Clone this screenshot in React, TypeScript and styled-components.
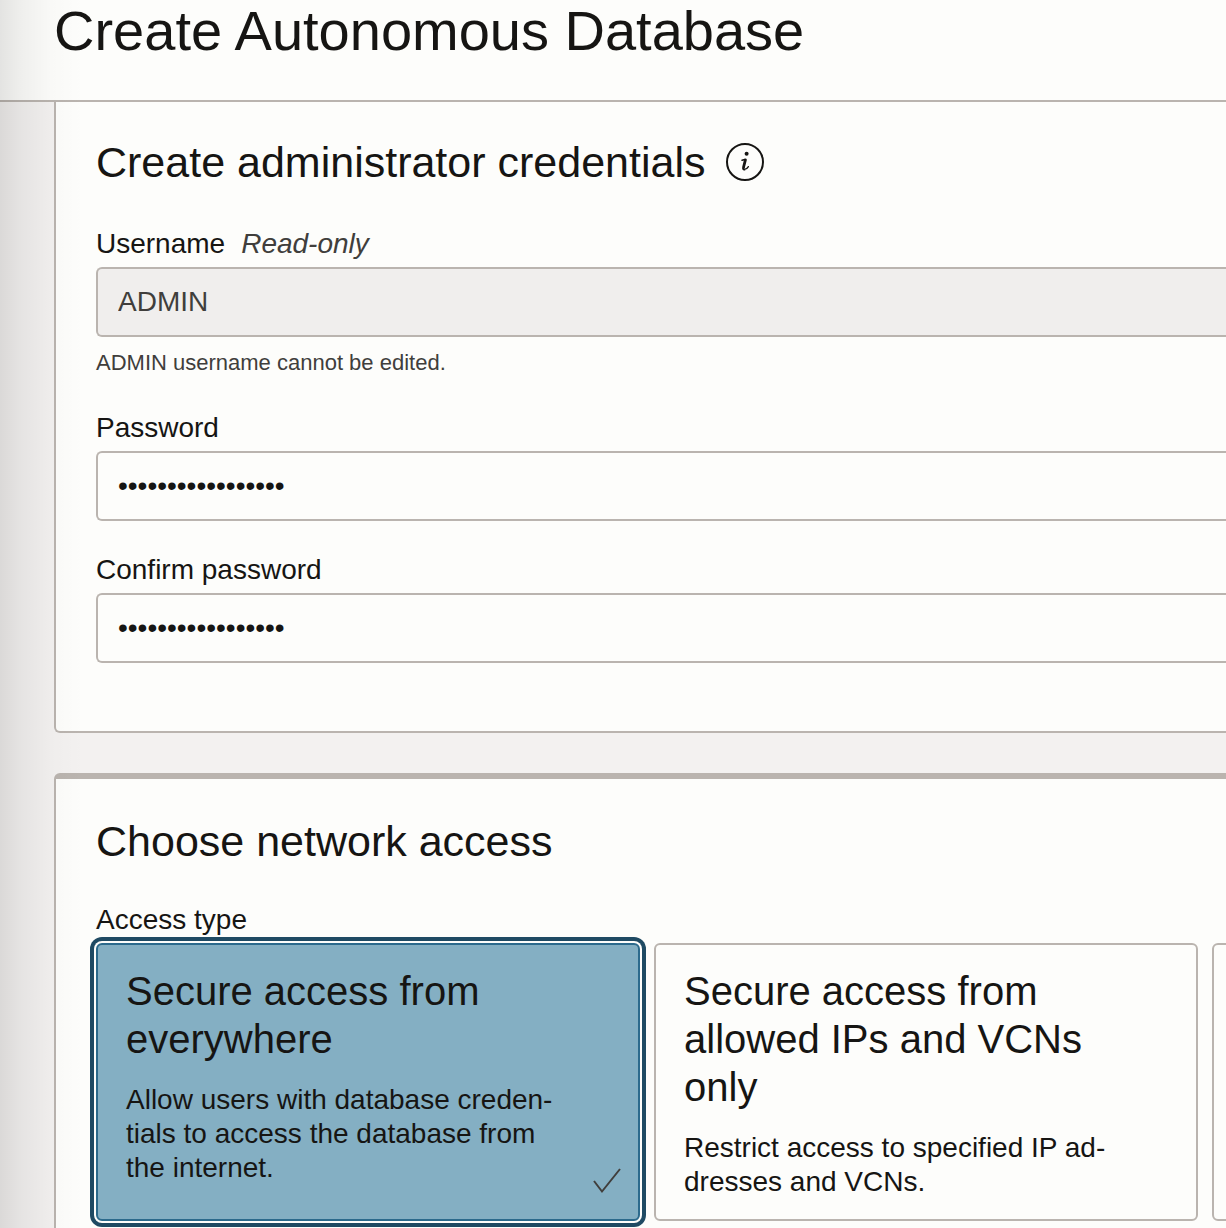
import React, { useState } from "react";
import styled, { createGlobalStyle } from "styled-components";

const ink = "#161513";
const line = "#bab4af";
const surface = "#fdfdfb";

const GlobalStyle = createGlobalStyle`
  *, *::before, *::after { box-sizing: border-box; }
  body {
    margin: 0;
    background: #f3f1f0;
    color: ${ink};
    font-family: "Liberation Sans", Arial, sans-serif;
  }
`;

const Page = styled.div`
  position: relative;
  display: flex;
  flex-direction: column;
  min-height: 100vh;
  overflow-x: clip;
`;

const EdgeShade = styled.div`
  position: absolute;
  top: 0;
  bottom: 0;
  left: 0;
  width: 84px;
  pointer-events: none;
  background: linear-gradient(
    to right,
    rgba(0, 0, 0, 0.1) 0%,
    rgba(0, 0, 0, 0.055) 26%,
    rgba(0, 0, 0, 0.015) 62%,
    rgba(0, 0, 0, 0) 100%
  );
`;

const Header = styled.header`
  height: 102px;
  padding-left: 54px;
  background: ${surface};
  border-bottom: 2px solid ${line};
`;

const Title = styled.h1`
  margin: 0;
  font-size: 56px;
  font-weight: 400;
  line-height: 62px;
  white-space: nowrap;
`;

const Main = styled.main`
  flex: 1;
  display: flex;
  flex-direction: column;
  gap: 40px;
  padding-left: 54px;
`;

const Panel = styled.section<{ $continued?: boolean }>`
  display: flex;
  flex-direction: column;
  gap: ${(p) => (p.$continued ? "39px" : "36px")};
  padding: ${(p) => (p.$continued ? "34px 0 68px 40px" : "36px 0 6px 40px")};
  background: ${surface};
  border: 2px solid ${line};
  border-right: 0;
  border-top-width: ${(p) => (p.$continued ? "0" : "6px")};
  border-bottom-width: ${(p) => (p.$continued ? "2px" : "0")};
  border-radius: ${(p) => (p.$continued ? "0 0 0 6px" : "6px 0 0 0")};
  flex-grow: ${(p) => (p.$continued ? 0 : 1)};
`;

const PanelHead = styled.div`
  display: flex;
  align-items: center;
  gap: 20px;
`;

const PanelTitle = styled.h2`
  margin: 0;
  font-size: 43px;
  font-weight: 400;
  line-height: 52px;
  white-space: nowrap;
`;

const InfoButton = styled.button`
  display: flex;
  padding: 0;
  border: 0;
  background: none;
  color: inherit;
`;

const Fields = styled.form`
  display: flex;
  flex-direction: column;
  gap: 32px;
`;

const Field = styled.div`
  display: flex;
  flex-direction: column;
`;

const LabelRow = styled.div`
  display: flex;
  gap: 16px;
  margin-bottom: 6px;
  font-size: 28px;
  line-height: 34px;
`;

const Note = styled.em`
  color: #403e3c;
`;

const Input = styled.input`
  width: 100%;
  height: 70px;
  padding: 0 20px;
  border: 2px solid ${line};
  border-right: 0;
  border-radius: 6px 0 0 6px;
  outline: 0;
  background: ${surface};
  color: ${ink};
  font: 28px "Liberation Sans", Arial, sans-serif;

  &:read-only {
    background: #f0eeed;
    color: #403e3c;
  }
`;

const Hint = styled.p`
  margin: 10px 0 0;
  color: #403e3c;
  font-size: 22px;
  line-height: 32px;
`;

const Choices = styled.fieldset`
  min-width: 0;
  margin: 0;
  padding: 0;
  border: 0;
`;

const Legend = styled.legend`
  padding: 0;
  margin-bottom: 6px;
  font-size: 28px;
  line-height: 34px;
`;

const CardRow = styled.div`
  display: grid;
  grid-auto-flow: column;
  grid-auto-columns: 544px;
  gap: 14px;
`;

const Card = styled.label<{ $selected: boolean }>`
  position: relative;
  display: flex;
  flex-direction: column;
  gap: 20px;
  padding: 22px 28px 20px;
  border: 2px solid ${(p) => (p.$selected ? "#2c6a8c" : line)};
  border-radius: 6px;
  background: ${(p) => (p.$selected ? "#84afc3" : surface)};
  box-shadow: ${(p) => (p.$selected ? `0 0 0 2px ${surface}, 0 0 0 6px #1f4a63` : "none")};
`;

const Radio = styled.input`
  position: absolute;
  inset: 0;
  width: 100%;
  height: 100%;
  margin: 0;
  opacity: 0;
`;

const CardTitle = styled.span`
  font-size: 40px;
  line-height: 48px;
  white-space: pre-line;
`;

const CardText = styled.span`
  font-size: 28px;
  line-height: 34px;
  white-space: pre-line;
`;

const Check = styled.svg`
  position: absolute;
  right: 16px;
  bottom: 24px;
`;

const options = [
  {
    id: "everywhere",
    title: "Secure access from\neverywhere",
    text: "Allow users with database creden-\ntials to access the database from\nthe internet.",
  },
  {
    id: "allowed",
    title: "Secure access from\nallowed IPs and VCNs\nonly",
    text: "Restrict access to specified IP ad-\ndresses and VCNs.",
  },
  { id: "private", title: "", text: "" },
];

function InfoIcon() {
  return (
    <svg width="40" height="40" viewBox="0 0 40 40" fill="none" stroke="currentColor">
      <circle cx="20" cy="20" r="18" strokeWidth="2" />
      <circle cx="21.6" cy="11.8" r="2" fill="currentColor" stroke="none" />
      <path d="M17 18.2 L20.8 17.2" strokeWidth="1.4" strokeLinecap="round" />
      <path d="M20.6 17.2 L18.6 25 C18.2 27 18.8 27.4 19.8 26.9" strokeWidth="2.8" />
      <path d="M19 27.4 C21 27.6 22.6 26 23.4 24.6" strokeWidth="1.3" strokeLinecap="round" />
    </svg>
  );
}

export default function App() {
  const [access, setAccess] = useState("everywhere");
  const [password, setPassword] = useState("Autonomous#Data17");
  const [confirm, setConfirm] = useState("Autonomous#Data17");

  return (
    <Page>
      <GlobalStyle />
      <Header>
        <Title>Create Autonomous Database</Title>
      </Header>
      <Main>
        <Panel $continued>
          <PanelHead>
            <PanelTitle>Create administrator credentials</PanelTitle>
            <InfoButton type="button" aria-label="More information">
              <InfoIcon />
            </InfoButton>
          </PanelHead>
          <Fields>
            <Field>
              <LabelRow>
                <label htmlFor="username">Username</label>
                <Note>Read-only</Note>
              </LabelRow>
              <Input id="username" value="ADMIN" readOnly aria-describedby="username-hint" />
              <Hint id="username-hint">ADMIN username cannot be edited.</Hint>
            </Field>
            <Field>
              <LabelRow>
                <label htmlFor="password">Password</label>
              </LabelRow>
              <Input
                id="password"
                type="password"
                autoComplete="new-password"
                value={password}
                onChange={(e) => setPassword(e.target.value)}
              />
            </Field>
            <Field>
              <LabelRow>
                <label htmlFor="confirm">Confirm password</label>
              </LabelRow>
              <Input
                id="confirm"
                type="password"
                autoComplete="new-password"
                value={confirm}
                onChange={(e) => setConfirm(e.target.value)}
              />
            </Field>
          </Fields>
        </Panel>
        <Panel>
          <PanelHead>
            <PanelTitle>Choose network access</PanelTitle>
          </PanelHead>
          <Choices>
            <Legend>Access type</Legend>
            <CardRow>
              {options.map((o) => (
                <Card key={o.id} $selected={access === o.id}>
                  <Radio
                    type="radio"
                    name="access"
                    value={o.id}
                    aria-label={o.title ? undefined : "Private endpoint"}
                    checked={access === o.id}
                    onChange={() => setAccess(o.id)}
                  />
                  <CardTitle>{o.title}</CardTitle>
                  <CardText>{o.text}</CardText>
                  {access === o.id && (
                    <Check width="30" height="28" viewBox="0 0 30 28" fill="none" aria-hidden="true">
                      <path d="M2 14 L10 24.5 L28 2" stroke="#403e3c" strokeWidth="2" />
                    </Check>
                  )}
                </Card>
              ))}
            </CardRow>
          </Choices>
        </Panel>
      </Main>
      <EdgeShade />
    </Page>
  );
}
